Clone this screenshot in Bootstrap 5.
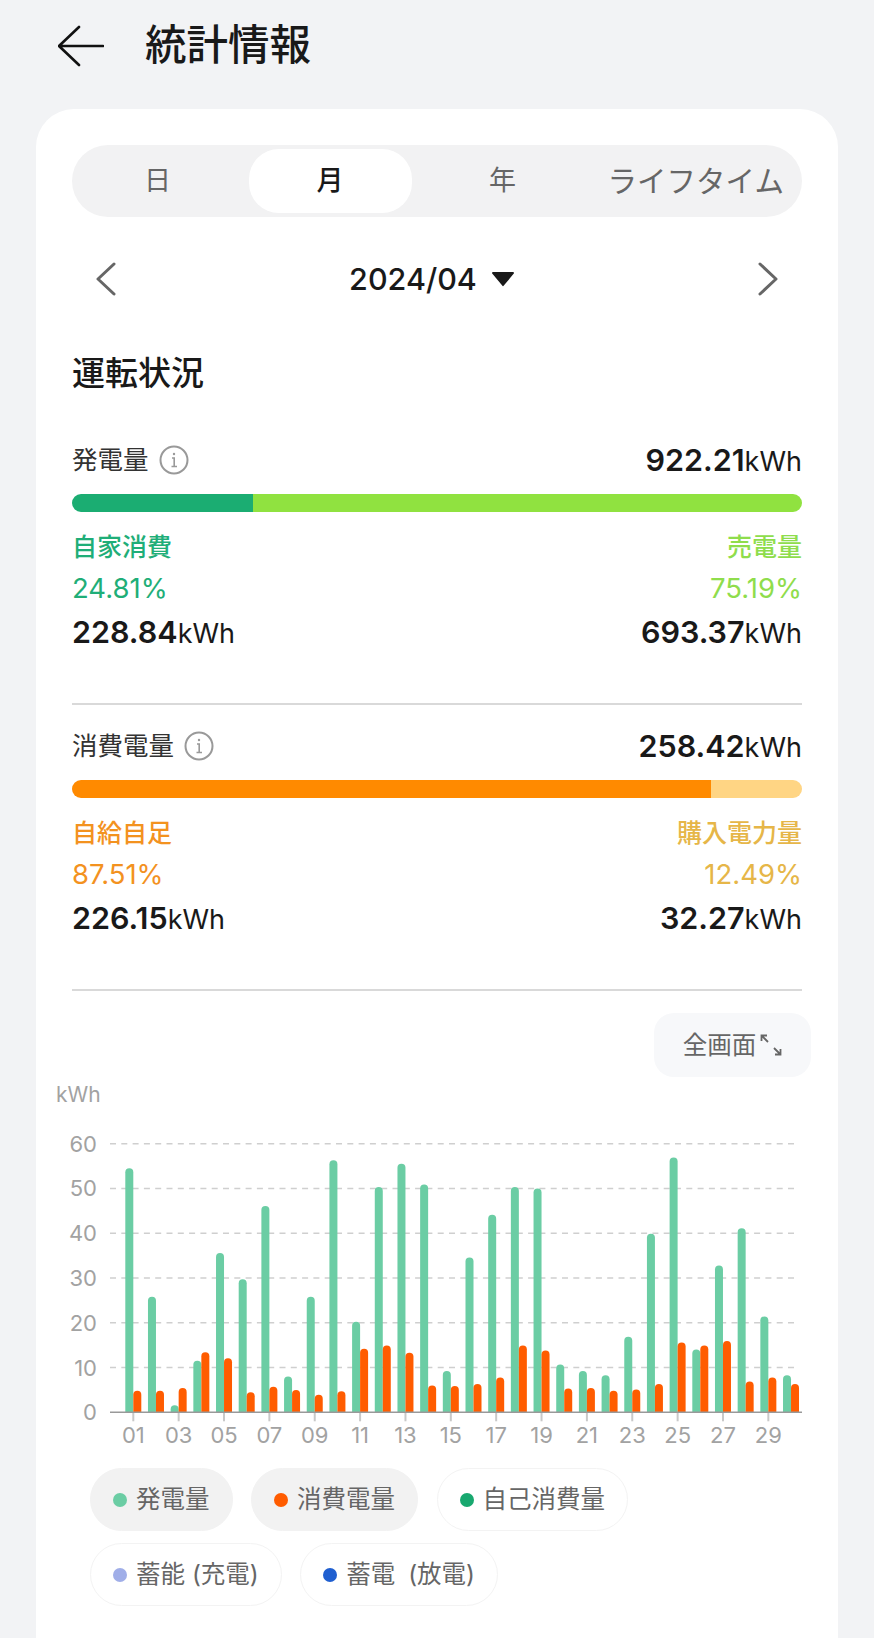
<!DOCTYPE html>
<html lang="ja">
<head>
    <meta charset="UTF-8">
    <title>統計情報</title>
    <link href="https://cdn.jsdelivr.net/npm/bootstrap@5.3.0/dist/css/bootstrap.min.css" rel="stylesheet">
    <style>
        html, body { height: 1638px; overflow: hidden; }
        body {
          background: #f2f3f5;
          color: #191919;
          font-family: Inter, "Noto Sans CJK JP", sans-serif;
        }
        .page-head { height: 109px; padding: 0 0 17px 58px; }
        .page-title { font-size: 41.5px; font-weight: 500; margin: 0 0 0 41px; line-height: 1; }
        .stat-card {
          margin: 0 36px;
          padding: 36px 36px 0;
          background: #fff;
          border-radius: 38px 38px 0 0;
          height: 1529px;
        }
        .seg-box { height: 72px; background: #f2f2f3; border-radius: 36px; padding: 4px; gap: 9.5px; }
        .seg-tab { flex: 0 0 163px; font-size: 27px; color: #666; border-radius: 30px; }
        .seg-tab:last-child { flex: 1 1 0; white-space: nowrap; font-size: 29.5px; }
        .seg-tab.is-on { background: #fff; color: #191919; font-weight: 500; }
        .date-row { height: 64px; margin-top: 30px; padding: 0 24px; }
        .date-now { font-size: 30.5px; font-weight: 500; margin-right: 6px; }
        .date-mid { margin-right: 10px; }
        .block-title { font-size: 33px; font-weight: 500; line-height: 44px; margin: 40px 0 0; }
        .sum-row { height: 40px; margin-top: 45px; font-size: 25.5px; color: #333; }
        .sum-row.next { margin-top: 21px; }
        .big-num { font-size: 30.5px; font-weight: 600; color: #191919; }
        .unit-txt { font-size: 27px; font-weight: 400; color: #191919; }
        .info-gap { gap: 10px; }
        .split-bar { height: 18px; margin-top: 14px; border-radius: 9px; overflow: hidden; }
        .split-bar div { height: 100%; }
        .lab-row { height: 36px; margin-top: 18px; font-size: 25px; font-weight: 500; }
        .pct-row { height: 36px; margin-top: 5px; font-size: 27.5px; }
        .val-row { height: 40px; margin-top: 5px; }
        .c-self { color: #1fae78; }
        .c-sell { color: #8fdd4c; }
        .c-auto { color: #f3921f; }
        .c-buy { color: #e6b648; }
        .sep-line { height: 2px; margin-top: 51px; background: #d9d9d9; }
        .full-btn {
          width: 157px; height: 64px; margin: 22px -9px 0 auto;
          background: #f7f8fa; border-radius: 20px;
          font-size: 24.5px; color: #666;
        }
        .chart-svg { display: block; margin: -2px 0 0 -32px; }
        .chart-svg text { font-family: Inter, sans-serif; fill: #a2a2a2; font-size: 22px; }
        .legend-box { margin: 18px 0 0 18px; gap: 12px; }
        .legend-line { gap: 18.5px; }
        .leg-pill {
          height: 63px; padding: 0 22px; border-radius: 32px;
          border: 1px solid #f3f3f3; font-size: 24.5px; color: #666; gap: 9px;
        }
        .leg-pill.is-on { background: #f2f2f2; border-color: #f2f2f2; }
        .leg-wide { word-spacing: 6px; }
        .leg-dot { width: 14px; height: 14px; border-radius: 50%; }
    </style>
</head>
<body>
<!-- header -->
<div class="page-head d-flex align-items-center">
    <svg width="46" height="42" viewBox="0 0 46 42" fill="none" stroke="#111" stroke-width="2.6" stroke-linecap="round" stroke-linejoin="round">
        <path d="M45 21H1M21 2 1 21l20 19"/>
    </svg>
    <h1 class="page-title">統計情報</h1>
</div>

<div class="stat-card">
    <!-- tabs -->
    <div class="seg-box d-flex">
        <div class="seg-tab d-flex align-items-center justify-content-center">日</div>
        <div class="seg-tab is-on d-flex align-items-center justify-content-center">月</div>
        <div class="seg-tab d-flex align-items-center justify-content-center">年</div>
        <div class="seg-tab d-flex align-items-center justify-content-center">ライフタイム</div>
    </div>

    <div class="date-row d-flex align-items-center justify-content-between">
        <svg width="20" height="34" viewBox="0 0 20 34" fill="none" stroke="#666" stroke-width="3" stroke-linecap="round" stroke-linejoin="round"><path d="M18 2 2 17l16 15"/></svg>
        <div class="date-mid d-flex align-items-center gap-2">
            <span class="date-now">2024/04</span>
            <svg width="24" height="16" viewBox="0 0 24 16"><path d="M2 1h20a1 1 0 0 1 .8 1.6l-10 12a1 1 0 0 1-1.6 0l-10-12A1 1 0 0 1 2 1z" fill="#191919"/></svg>
        </div>
        <svg width="20" height="34" viewBox="0 0 20 34" fill="none" stroke="#666" stroke-width="3" stroke-linecap="round" stroke-linejoin="round"><path d="M2 2l16 15L2 32"/></svg>
    </div>

    <h2 class="block-title">運転状況</h2>

    <!-- 発電量 -->
    <div class="sum-row d-flex align-items-center justify-content-between">
        <div class="info-gap d-flex align-items-center">
            <span>発電量</span>
            <svg width="30" height="30" viewBox="0 0 30 30" fill="none" stroke="#999" stroke-width="2"><circle cx="15" cy="15" r="13.5"/><path d="M13 13h2.2v8M12.5 21.500h5.500" stroke-width="1.600"/><circle cx="15" cy="9" r="1.200" fill="#999" stroke="none"/></svg>
        </div>
        <div><span class="big-num">922.21</span><span class="unit-txt">kWh</span></div>
    </div>
    <div class="split-bar d-flex">
        <div style="width:181px;background:#1bad72"></div>
        <div class="flex-grow-1" style="background:#90e240"></div>
    </div>
    <div class="lab-row d-flex align-items-center justify-content-between">
        <span class="c-self">自家消費</span><span class="c-sell">売電量</span>
    </div>
    <div class="pct-row d-flex align-items-center justify-content-between">
        <span class="c-self">24.81%</span><span class="c-sell">75.19%</span>
    </div>
    <div class="val-row d-flex align-items-center justify-content-between">
        <div><span class="big-num">228.84</span><span class="unit-txt">kWh</span></div>
        <div><span class="big-num">693.37</span><span class="unit-txt">kWh</span></div>
    </div>
    <div class="sep-line"></div>

    <!-- 消費電量 -->
    <div class="sum-row next d-flex align-items-center justify-content-between">
        <div class="info-gap d-flex align-items-center">
            <span>消費電量</span>
            <svg width="30" height="30" viewBox="0 0 30 30" fill="none" stroke="#999" stroke-width="2"><circle cx="15" cy="15" r="13.5"/><path d="M13 13h2.2v8M12.5 21.500h5.500" stroke-width="1.600"/><circle cx="15" cy="9" r="1.200" fill="#999" stroke="none"/></svg>
        </div>
        <div><span class="big-num">258.42</span><span class="unit-txt">kWh</span></div>
    </div>
    <div class="split-bar d-flex">
        <div style="width:639px;background:#ff8a00"></div>
        <div class="flex-grow-1" style="background:#ffd584"></div>
    </div>
    <div class="lab-row d-flex align-items-center justify-content-between">
        <span class="c-auto">自給自足</span><span class="c-buy">購入電力量</span>
    </div>
    <div class="pct-row d-flex align-items-center justify-content-between">
        <span class="c-auto">87.51%</span><span class="c-buy">12.49%</span>
    </div>
    <div class="val-row d-flex align-items-center justify-content-between">
        <div><span class="big-num">226.15</span><span class="unit-txt">kWh</span></div>
        <div><span class="big-num">32.27</span><span class="unit-txt">kWh</span></div>
    </div>
    <div class="sep-line"></div>

    <div class="full-btn d-flex align-items-center justify-content-center gap-1">
        <span>全画面</span>
        <svg width="22" height="22" viewBox="0 0 22 22" fill="none" stroke="#666" stroke-width="1.800"><path d="M1.500 7V1.500H7M1.500 1.500 8 8M20.500 15v5.500H15M20.500 20.500 14 14"/></svg>
    </div>

    <!-- chart drawn below from the two arrays -->
    <svg id="chart" class="chart-svg" width="772" height="375" viewBox="40 1075 772 375"></svg>

    <div class="legend-box d-flex flex-column">
        <div class="legend-line d-flex">
            <div class="leg-pill is-on d-flex align-items-center"><span class="leg-dot" style="background:#6bcda4"></span>発電量</div>
            <div class="leg-pill is-on d-flex align-items-center"><span class="leg-dot" style="background:#ff5c00"></span>消費電量</div>
            <div class="leg-pill d-flex align-items-center"><span class="leg-dot" style="background:#18a86f"></span>自己消費量</div>
        </div>
        <div class="legend-line d-flex">
            <div class="leg-pill d-flex align-items-center"><span class="leg-dot" style="background:#a0aee8"></span>蓄能 (充電)</div>
            <div class="leg-pill leg-wide d-flex align-items-center"><span class="leg-dot" style="background:#1f5fd0"></span>蓄電 (放電)</div>
        </div>
    </div>
</div>

<script src="https://cdn.jsdelivr.net/npm/bootstrap@5.3.0/dist/js/bootstrap.bundle.min.js"></script>
<script>
    const gen = [54.5,25.8,1.6,11.5,35.6,29.7,46.1,8,25.8,56.3,20.2,50.3,55.5,50.9,9.2,34.6,44.1,50.3,50,10.7,9.2,8.3,16.9,39.9,56.9,14,32.8,41.1,21.4,8.3];
    const use = [4.8,4.8,5.4,13.4,12.1,4.5,5.7,5,3.9,4.7,14.2,14.9,13.3,6,5.9,6.3,7.8,14.9,13.8,5.3,5.4,4.8,5.1,6.3,15.6,14.9,15.9,6.9,7.8,6.3];
    const y0 = 1412.3, perUnit = 4.477, x1 = 133.3, step = 22.68;

    function topBar(x, val, color) {
      const top = y0 - val * perUnit;
      const r = Math.min(4, val * perUnit);
      return `<path d="M${x} ${y0}V${top + r}a${r} ${r} 0 0 1 8 0V${y0}z" fill="${color}"/>`;
    }

    let out = '<text x="56" y="1102" style="font-size:21px">kWh</text>';
    for (let v = 0; v <= 60; v += 10) {
      const y = y0 - v * perUnit;
      if (v > 0) out += `<line x1="110" x2="797" y1="${y}" y2="${y}" stroke="#cfcfcf" stroke-width="1.500" stroke-dasharray="6 5.300"/>`;
      out += `<text x="97" y="${y + 8}" text-anchor="end">${v}</text>`;
    }
    for (let d = 1; d <= 29; d += 2) {
      const x = x1 + (d - 1) * step;
      out += `<line x1="${x}" x2="${x}" y1="${y0}" y2="${y0 + 9}" stroke="#c9c9c9" stroke-width="2"/>`;
      out += `<text x="${x}" y="1443" text-anchor="middle">${String(d).padStart(2, '0')}</text>`;
    }
    gen.forEach((v, i) => {
      const x = x1 + i * step;
      out += topBar(x - 8, v, '#6bcda4') + topBar(x, use[i], '#ff5c00');
    });
    out += `<line x1="110" x2="802" y1="${y0}" y2="${y0}" stroke="#999" stroke-width="1.500"/>`;
    document.getElementById('chart').innerHTML = out;
</script>
</body>
</html>
